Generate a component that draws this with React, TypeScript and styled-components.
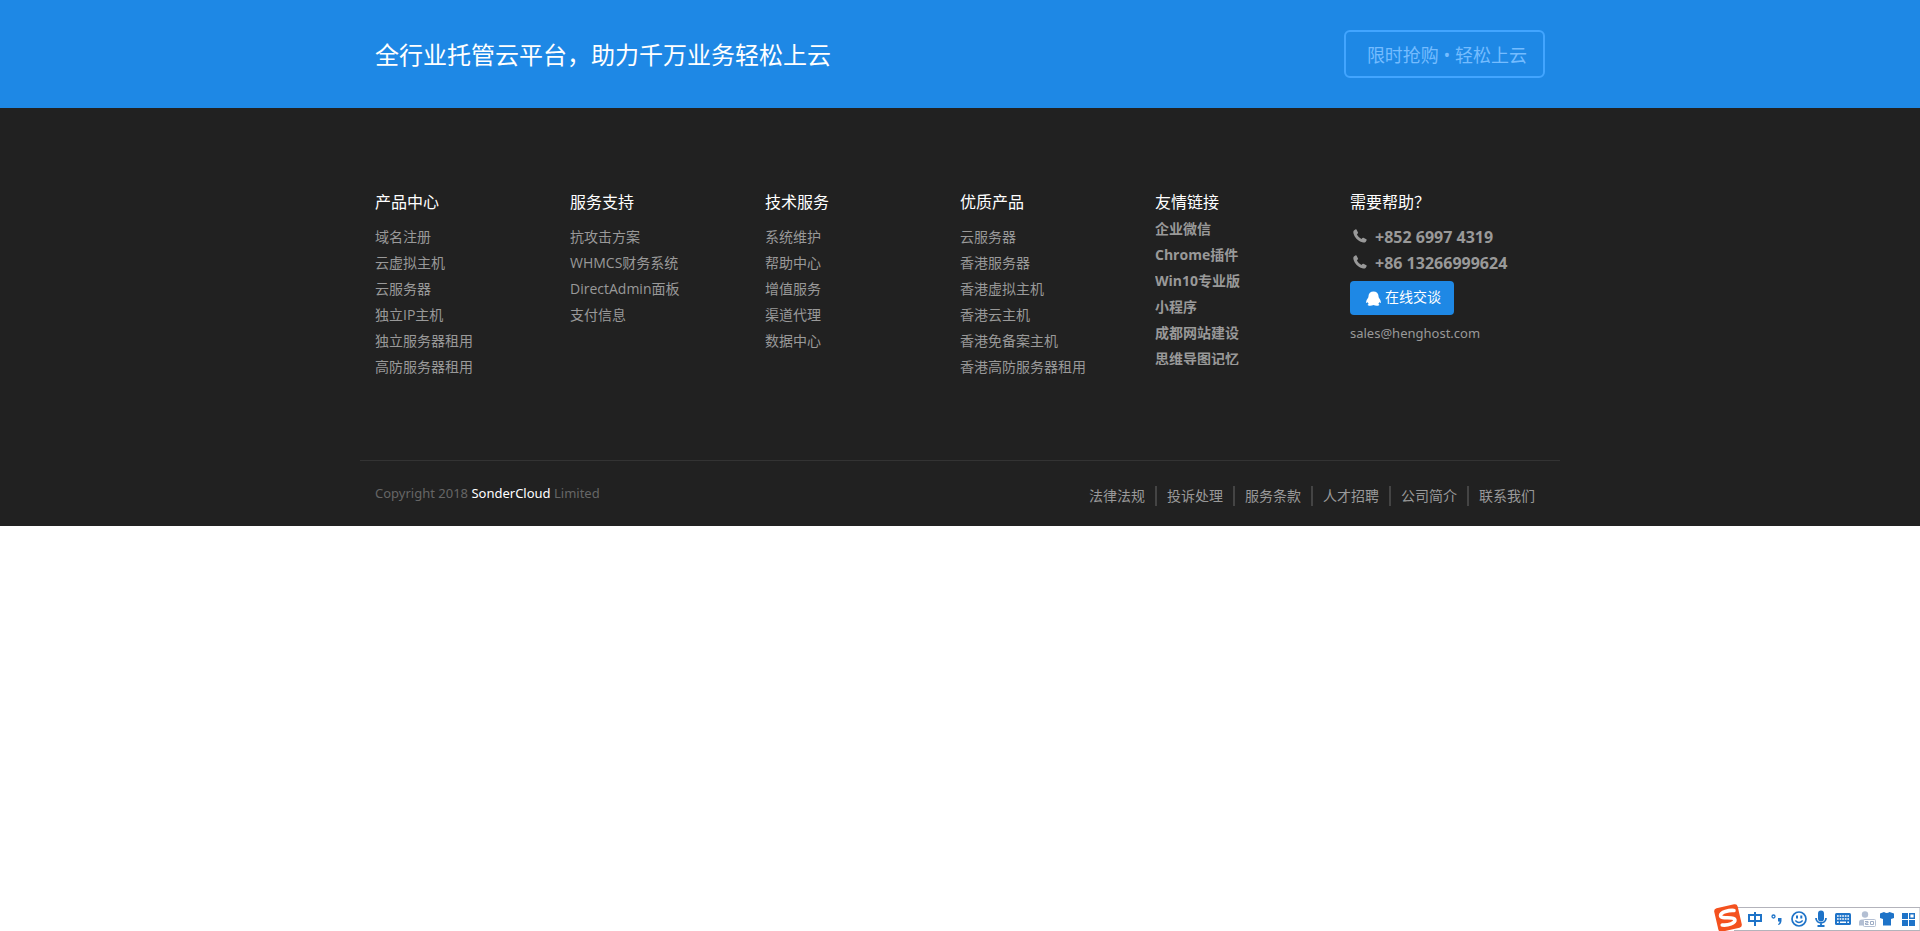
import React from 'react';
import styled, { createGlobalStyle } from 'styled-components';

const latin = '"Noto Sans", "Noto Sans CJK SC", sans-serif';

const GlobalStyle = createGlobalStyle`
  *, *::before, *::after { box-sizing: border-box; }
  body {
    margin: 0;
    background: #fff;
    color: #999;
    font-family: "Open Sans", "Noto Sans CJK SC", sans-serif;
    font-size: 14px;
    line-height: 26px;
  }
  a { color: inherit; text-decoration: none; }
  ul { list-style: none; margin: 0; padding: 0; }
`;

const Container = styled.div`
  width: 100%;
  max-width: 1200px;
  margin: 0 auto;
  padding: 0 15px;
`;

const Banner = styled.section`
  background: #1e88e5;
  padding: 30px 0;
`;

const BannerRow = styled(Container)`
  display: flex;
  align-items: center;
  justify-content: space-between;
  flex-wrap: wrap;
  gap: 16px;
`;

const BannerTitle = styled.h2`
  margin: 0;
  padding-top: 2px;
  color: #fff;
  font-size: 24px;
  font-weight: 400;
  line-height: 36px;
`;

const OutlineLink = styled.a`
  padding: 10px 16px 8px 21px;
  border: 2px solid #42a5ff;
  border-radius: 6px;
  color: #74bcff;
  font-size: 18px;
`;

const Footer = styled.footer`
  background: #212121;
`;

const Columns = styled(Container)`
  display: grid;
  grid-template-columns: repeat(auto-fit, minmax(180px, 1fr));
  padding-top: 81px;
  padding-bottom: 80px;
`;

const ColumnTitle = styled.h3<{ $tight?: boolean }>`
  margin: 0 0 ${p => (p.$tight ? 1 : 9)}px;
  color: #fff;
  font-size: 16px;
  font-weight: 400;
  line-height: 26px;
`;

const FriendList = styled.ul`
  max-height: 149px;
  overflow: hidden;
  font-weight: 700;
`;

const PhoneLine = styled.a`
  display: flex;
  align-items: center;
  gap: 8px;
  padding-left: 3px;
  font-family: ${latin};
  font-size: 16px;
  font-weight: 700;

  svg { margin-bottom: 2px; }
`;

const ChatButton = styled.button`
  display: flex;
  align-items: center;
  gap: 4px;
  height: 34px;
  margin: 5px 0;
  padding: 0 13px 2px 16px;
  border: 0;
  border-radius: 4px;
  background: #1e88e5;
  color: #fff;
  font: inherit;
  cursor: pointer;

  svg { margin-top: 2px; }
`;

const MailLink = styled.a`
  font-family: ${latin};
  font-size: 13px;
`;

const BottomBar = styled(Container)`
  display: flex;
  align-items: flex-start;
  justify-content: space-between;
  flex-wrap: wrap;
  padding-top: 19px;
  padding-bottom: 20px;
  border-top: 1px solid #333;
`;

const Copyright = styled.p`
  margin: 0;
  color: #666;
  font-family: ${latin};
  font-size: 13px;

  a { color: #fff; }
`;

const LegalLinks = styled.ul`
  display: flex;
  padding-top: 6px;
  line-height: 20px;

  li { padding: 0 10px; }
  li + li { border-left: 2px solid #444; }
`;

const ImeBar = styled.div`
  position: fixed;
  right: 0;
  bottom: 0;
  display: flex;

  svg { display: block; }
`;

interface LinkColumn {
  title: string;
  links: string[];
}

const columns: LinkColumn[] = [
  { title: '产品中心', links: ['域名注册', '云虚拟主机', '云服务器', '独立IP主机', '独立服务器租用', '高防服务器租用'] },
  { title: '服务支持', links: ['抗攻击方案', 'WHMCS财务系统', 'DirectAdmin面板', '支付信息'] },
  { title: '技术服务', links: ['系统维护', '帮助中心', '增值服务', '渠道代理', '数据中心'] },
  { title: '优质产品', links: ['云服务器', '香港服务器', '香港虚拟主机', '香港云主机', '香港免备案主机', '香港高防服务器租用'] },
];

const friends = ['企业微信', 'Chrome插件', 'Win10专业版', '小程序', '成都网站建设', '思维导图记忆'];
const phones = ['+852 6997 4319', '+86 13266999624'];
const legal = ['法律法规', '投诉处理', '服务条款', '人才招聘', '公司简介', '联系我们'];

const Items = ({ items }: { items: string[] }) => (
  <>
    {items.map(item => (
      <li key={item}><a href="#">{item}</a></li>
    ))}
  </>
);

const PhoneIcon = () => (
  <svg width="14" height="14" viewBox="0 0 14 14" fill="currentColor" aria-hidden="true">
    <path d="M.9 1.500L2.300.4q.8-.5 1.200.2L5 3.400q.3.700-.3 1.200l-.8.7c.9 1.900 2.500 3.600 4.600 4.700l.9-1q.5-.5 1.100-.2l2.800 1.500q.6.400.3 1l-.8 1.400c-.6.900-2.100 1.100-3.500.6C5 11.900 1.700 8.700.5 4.400.2 3.100.2 2.100.9 1.500z" />
  </svg>
);

const PenguinIcon = () => (
  <svg width="15" height="15" viewBox="0 0 15 15" fill="currentColor" aria-hidden="true">
    <path d="M7.500.4c3 0 4.900 2 5 4.700 0 .7.100 1.100.4 1.600 1.100 1.500 2.100 3.200 1.900 4.800-.1.900-.8.6-1.500-.4-.2.800-.5 1.300-1 1.800.8.300 1.100.6 1 1.100-.2.900-4.100.9-5.800.1-1.700.8-5.600.8-5.800-.1-.1-.5.200-.8 1-1.100-.5-.5-.8-1-1-1.800-.7 1-1.400 1.300-1.500.4-.2-1.600.8-3.300 1.900-4.800.3-.5.4-.9.4-1.600C2.600 2.400 4.500.4 7.500.4z" />
  </svg>
);

const ImeIcons = () => (
  <svg width="206" height="28" viewBox="0 0 206 28" role="img" aria-label="输入法">
    <path d="M20 4.500H206V27.500H20" fill="#fff" stroke="#b3b3bb" />
    <g transform="rotate(-13 14 15)">
      <rect x="2" y="3" width="24" height="24" rx="3" fill="#f4511e" />
      <path d="M21.500 9C17 7.500 8 7.500 7.300 11c-.7 4.200 13 3.200 13 7.200 0 3.600-8 4.200-13.500 2.300" fill="none" stroke="#fff" strokeWidth="3.600" strokeLinecap="round" />
    </g>
    <g fill="none" stroke="#1e73c8" strokeWidth="2">
      <path d="M35 12h12v6H35zM41 9v14" />
      <circle cx="59.500" cy="13.500" r="1.500" strokeWidth="1.300" />
      <circle cx="85" cy="16" r="7" strokeWidth="1.700" />
      <path d="M81.300 17.500q3.700 4 7.400 0" strokeWidth="1.400" />
      <path d="M102 15c0 6.500 10 6.500 10 0M107 19.500v3.500M103.500 23h7" strokeWidth="1.800" />
    </g>
    <g fill="#1e73c8">
      <path d="M64 15h3.500v3q-.5 3.500-3 4l-.5-.8q1.700-.9 1.600-2.700H64z" />
      <path d="M82 12.500h2v3h-2zM86.300 12.500h2v3h-2z" />
      <rect x="104" y="7.500" width="6" height="11" rx="3" />
      <rect x="121" y="10" width="16" height="12" rx="1.500" />
      <path d="M166 10.500l4-1.500q2.800 2 5.500 0l4.500 1.500v4.500l-3 1v6.500h-8V16l-3-1z" />
      <path d="M188 10h6v6h-6zM188 17h6v6h-6zM195 17h6v6h-6z" />
    </g>
    <path d="M123 13h12M123 16h12" stroke="#fff" strokeWidth="1.500" strokeDasharray="1.700 .9" />
    <path d="M123 19.300h1.700M126 19.300h6M133.300 19.300h1.700" stroke="#fff" strokeWidth="1.500" />
    <path d="M195.700 10.700h4.600v4.600h-4.600z" fill="none" stroke="#1e73c8" strokeWidth="1.400" />
    <g fill="#b3bfd3">
      <circle cx="151" cy="11.500" r="3.200" />
      <path d="M145 22.500v-3q0-3 3-3h5v6z" />
    </g>
    <rect x="149.500" y="16.500" width="12" height="7" rx="1" fill="#fff" stroke="#b3bfd3" />
    <path d="M151 18.500h3v1.500h-2.500v1.500h3M156.500 18.500h3v3h-3z" fill="none" stroke="#9dacc5" />
  </svg>
);

export default function App() {
  return (
    <>
      <GlobalStyle />
      <Banner>
        <BannerRow>
          <BannerTitle>全行业托管云平台，助力千万业务轻松上云</BannerTitle>
          <OutlineLink href="#">限时抢购 • 轻松上云</OutlineLink>
        </BannerRow>
      </Banner>
      <Footer>
        <Columns>
          {columns.map(column => (
            <nav key={column.title} aria-label={column.title}>
              <ColumnTitle>{column.title}</ColumnTitle>
              <ul><Items items={column.links} /></ul>
            </nav>
          ))}
          <nav aria-label="友情链接">
            <ColumnTitle $tight>友情链接</ColumnTitle>
            <FriendList><Items items={friends} /></FriendList>
          </nav>
          <section>
            <ColumnTitle>需要帮助？</ColumnTitle>
            {phones.map(phone => (
              <PhoneLine key={phone} href={`tel:${phone.replace(/ /g, '')}`}>
                <PhoneIcon />
                {phone}
              </PhoneLine>
            ))}
            <ChatButton type="button">
              <PenguinIcon />
              在线交谈
            </ChatButton>
            <MailLink href="mailto:sales@henghost.com">sales@henghost.com</MailLink>
          </section>
        </Columns>
        <BottomBar>
          <Copyright>Copyright 2018 <a href="#">SonderCloud</a> Limited</Copyright>
          <LegalLinks><Items items={legal} /></LegalLinks>
        </BottomBar>
      </Footer>
      <ImeBar><ImeIcons /></ImeBar>
    </>
  );
}
